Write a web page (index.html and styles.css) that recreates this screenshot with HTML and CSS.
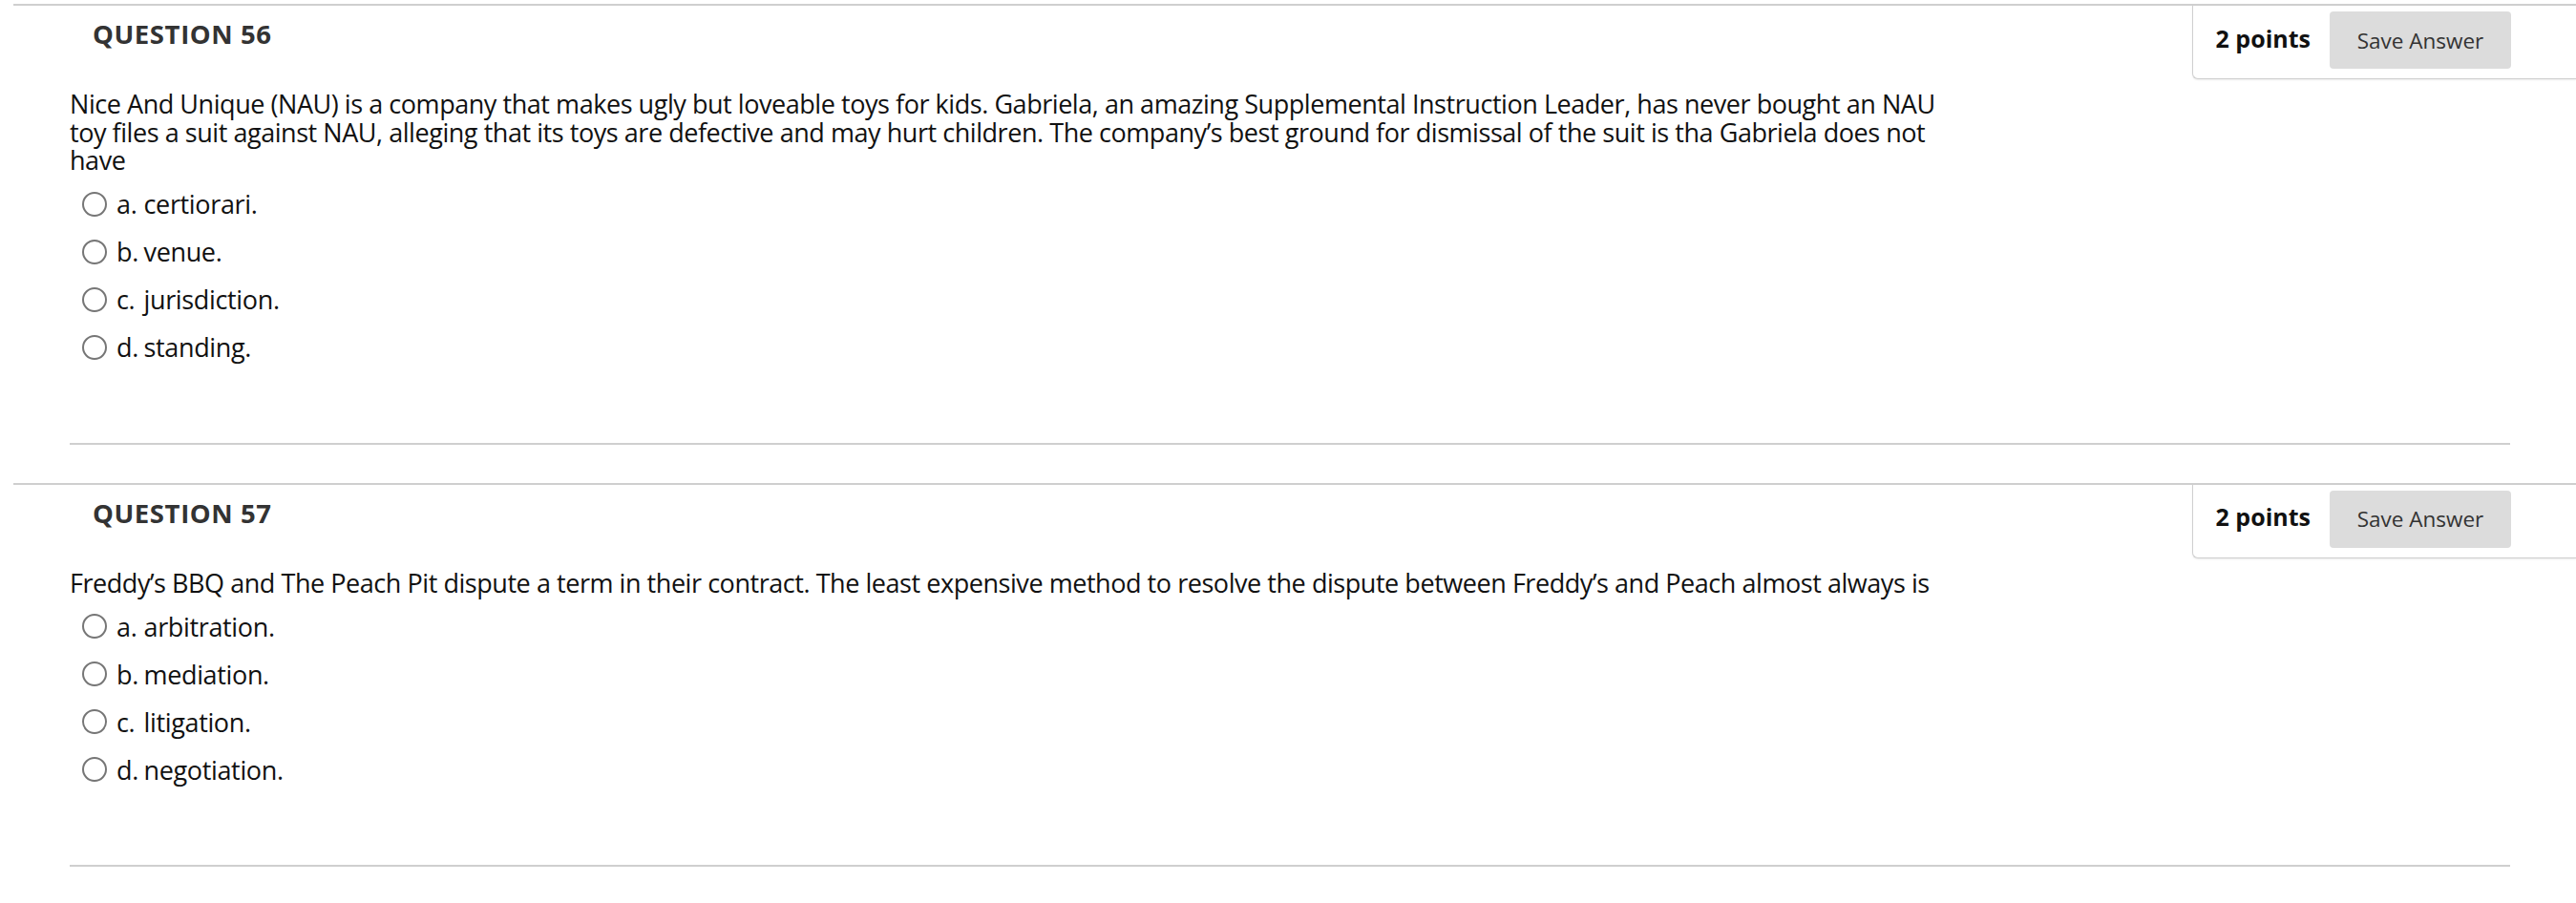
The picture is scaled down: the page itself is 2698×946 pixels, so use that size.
FILE: index.html
```html
<!DOCTYPE html>
<html lang="en">
<head>
<meta charset="utf-8">
<title>Questions</title>
<link rel="stylesheet" href="styles.css">
</head>
<body>
<ul class="questions">
  <li class="question">
    <div class="q-head">
      <h2 class="q-title">QUESTION 56</h2>
      <div class="q-panel">
        <span class="q-points">2 points</span>
        <button class="q-save" type="button">Save Answer</button>
      </div>
    </div>
    <div class="q-body">
      <p class="q-text">Nice And Unique (NAU) is a company that makes ugly but loveable toys for kids. Gabriela, an amazing Supplemental Instruction Leader, has never bought an NAU toy files a suit against NAU, alleging that its toys are defective and may hurt children. The company’s best ground for dismissal of the suit is tha Gabriela does not have</p>
      <ul class="options">
        <li class="option"><span class="radio"></span><span class="opt-label">a.</span><span class="opt-text">certiorari.</span></li>
        <li class="option"><span class="radio"></span><span class="opt-label">b.</span><span class="opt-text">venue.</span></li>
        <li class="option"><span class="radio"></span><span class="opt-label">c.</span><span class="opt-text">jurisdiction.</span></li>
        <li class="option"><span class="radio"></span><span class="opt-label">d.</span><span class="opt-text">standing.</span></li>
      </ul>
    </div>
  </li>
  <li class="question">
    <div class="q-head">
      <h2 class="q-title">QUESTION 57</h2>
      <div class="q-panel">
        <span class="q-points">2 points</span>
        <button class="q-save" type="button">Save Answer</button>
      </div>
    </div>
    <div class="q-body">
      <p class="q-text">Freddy’s BBQ and The Peach Pit dispute a term in their contract. The least expensive method to resolve the dispute between Freddy’s and Peach almost always is</p>
      <ul class="options">
        <li class="option"><span class="radio"></span><span class="opt-label">a.</span><span class="opt-text">arbitration.</span></li>
        <li class="option"><span class="radio"></span><span class="opt-label">b.</span><span class="opt-text">mediation.</span></li>
        <li class="option"><span class="radio"></span><span class="opt-label">c.</span><span class="opt-text">litigation.</span></li>
        <li class="option"><span class="radio"></span><span class="opt-label">d.</span><span class="opt-text">negotiation.</span></li>
      </ul>
    </div>
  </li>
</ul>
</body>
</html>
```

FILE: styles.css
```css
html, body {
  margin: 0;
  padding: 0;
  background: #ffffff;
}

body {
  font-family: "Open Sans", "Noto Sans", sans-serif;
  color: #111;
}

.questions {
  list-style: none;
  margin: 0;
  padding: 4px 0 0 14px;
}

.question {
  border-top: 2px solid #cfcfcf;
  margin-bottom: 40px;
}

.q-head {
  display: flex;
  justify-content: space-between;
  align-items: flex-start;
}

.q-title {
  margin: 15px 0 0 0;
  padding-left: 83px;
  font-size: 27.5px;
  line-height: 30px;
  font-weight: 700;
  color: #333;
  letter-spacing: 0.6px;
}

.q-panel {
  display: flex;
  align-items: center;
  gap: 20px;
  padding: 6px 68px 10px 24px;
  border-left: 1px solid #cfcfcf;
  border-bottom: 1px solid #cfcfcf;
  border-bottom-left-radius: 6px;
  box-shadow: 0 1px 2px rgba(0, 0, 0, 0.08);
  background: #fff;
}

.q-points {
  font-size: 25px;
  font-weight: 700;
  color: #111;
  margin-bottom: 5px;
}

.q-save {
  width: 190px;
  height: 60px;
  border: none;
  border-radius: 4px;
  background: #dcdcdc;
  font-family: "Open Sans", "Noto Sans", sans-serif;
  font-size: 22.5px;
  color: #333;
  padding: 0;
}

.q-body {
  margin: 0 69px 0 59px;
  border-bottom: 2px solid #cfcfcf;
  padding-bottom: 75px;
}

.q-text {
  margin: 11px 0 6px 0;
  max-width: 1972px;
  font-size: 27px;
  line-height: 29.5px;
  letter-spacing: -0.45px;
}

.options {
  list-style: none;
  margin: 0;
  padding: 0;
}

.option {
  display: flex;
  align-items: center;
  height: 50px;
  font-size: 27px;
  letter-spacing: -0.35px;
}

.radio {
  width: 22px;
  height: 22px;
  border: 2px solid #767676;
  border-radius: 50%;
  margin: 0 10px 0 13px;
  flex: none;
  box-sizing: content-box;
}

.opt-label {
  width: 28.5px;
  flex: none;
}
```
